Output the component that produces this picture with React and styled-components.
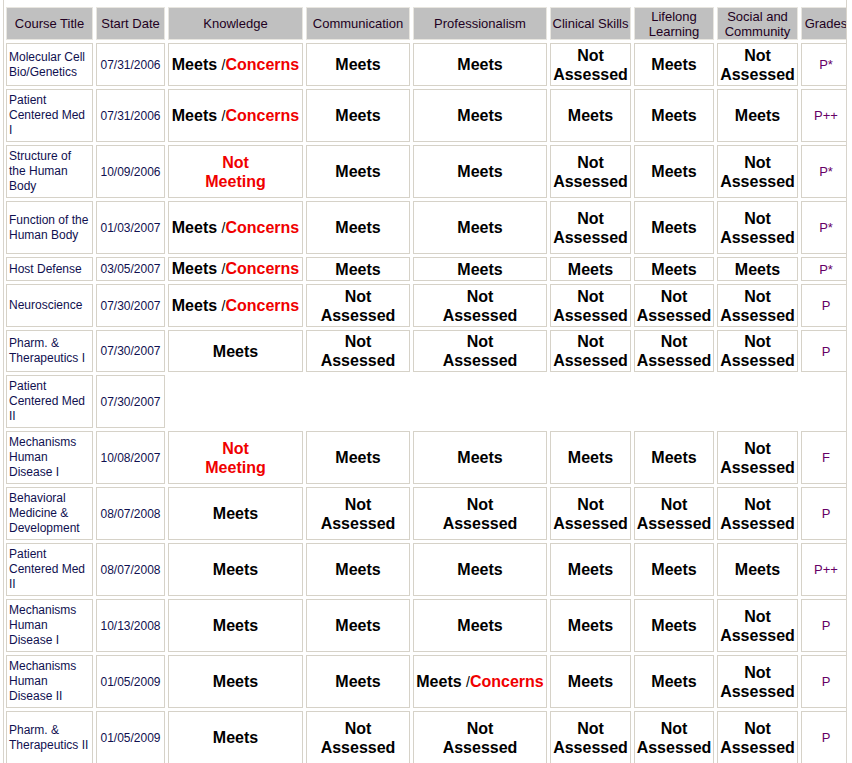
import React from 'react';
import styled, { createGlobalStyle } from 'styled-components';

const Global = createGlobalStyle`
  body { margin: 0; background: #fff; font-family: "Liberation Sans", Arial, sans-serif; }
`;

const Frame = styled.div`
  width: 844px;
  margin-left: 3px;
  border-left: 1px solid #d8d4cc;
  border-right: 1px solid #d8d4cc;
  padding-top: 4px;
  height: 763px;
  overflow: hidden;
  box-sizing: border-box;
`;

const Table = styled.table`
  border-collapse: separate;
  border-spacing: 3px;
  table-layout: fixed;
  width: 842px;
  margin-left: -1px;
`;

const Th = styled.th`
  background: #c0c0c0;
  border: 1px solid #e8e6e0;
  color: #220022;
  font-size: 13px;
  font-weight: normal;
  padding: 0 1px;
  line-height: 15px;
  height: 33px;
  box-sizing: border-box;
`;

const Td = styled.td`
  border: 1px solid #d6d2c8;
  text-align: center;
  padding: 0 1px;
  box-sizing: border-box;
`;

const TitleCell = styled(Td)`
  text-align: left;
  font-size: 12px;
  line-height: 15px;
  color: #101050;
  padding-left: 2px;
`;

const DateCell = styled(Td)`
  font-size: 12px;
  color: #101050;
`;

const Val = styled(Td)`
  font-size: 16px;
  font-weight: bold;
  line-height: 19px;
  color: #000;
`;

const Red = styled.span`
  color: #f00000;
`;
const Slash = styled.span`
  font-weight: normal;
  font-size: 14px;
`;

const Grade = styled(Td)`
  font-size: 13px;
  color: #660066;
`;

const Empty = styled.td``;

const M = 'Meets', NA = 'Not Assessed', MC = 'MC', NM = 'NM';

const rows = [
  ['Molecular Cell Bio/Genetics', '07/31/2006', [MC, M, M, NA, M, NA], 'P*', 43],
  ['Patient Centered Med I', '07/31/2006', [MC, M, M, M, M, M], 'P++', 53],
  ['Structure of the Human Body', '10/09/2006', [NM, M, M, NA, M, NA], 'P*', 53],
  ['Function of the Human Body', '01/03/2007', [MC, M, M, NA, M, NA], 'P*', 53],
  ['Host Defense', '03/05/2007', [MC, M, M, M, M, M], 'P*', 24],
  ['Neuroscience', '07/30/2007', [MC, NA, NA, NA, NA, NA], 'P', 43],
  ['Pharm. & Therapeutics I', '07/30/2007', [M, NA, NA, NA, NA, NA], 'P', 42],
  ['Patient Centered Med II', '07/30/2007', null, null, 53],
  ['Mechanisms Human Disease I', '10/08/2007', [NM, M, M, M, M, NA], 'F', 53],
  ['Behavioral Medicine & Development', '08/07/2008', [M, NA, NA, NA, NA, NA], 'P', 53],
  ['Patient Centered Med II', '08/07/2008', [M, M, M, M, M, M], 'P++', 53],
  ['Mechanisms Human Disease I', '10/13/2008', [M, M, M, M, M, NA], 'P', 53],
  ['Mechanisms Human Disease II', '01/05/2009', [M, M, MC, M, M, NA], 'P', 53],
  ['Pharm. & Therapeutics II', '01/05/2009', [M, NA, NA, NA, NA, NA], 'P', 53],
];

const render = (v) => {
  if (v === MC) return <>Meets <Slash>/</Slash><Red>Concerns</Red></>;
  if (v === NM) return <Red>Not<br />Meeting</Red>;
  if (v === NA) return <>Not<br />Assessed</>;
  return v;
};

const widths = [87, 69, 135, 104, 134, 81, 80, 81, 50];

export default function App() {
  return (
    <>
      <Global />
      <Frame>
        <Table>
          <colgroup>
            {widths.map((w, i) => <col key={i} style={{ width: w }} />)}
          </colgroup>
          <thead>
            <tr>
              <Th>Course Title</Th>
              <Th>Start Date</Th>
              <Th>Knowledge</Th>
              <Th>Communication</Th>
              <Th>Professionalism</Th>
              <Th>Clinical Skills</Th>
              <Th>Lifelong Learning</Th>
              <Th>Social and Community</Th>
              <Th>Grades</Th>
            </tr>
          </thead>
          <tbody>
            {rows.map(([title, date, vals, grade, h], i) => (
              <tr key={i} style={{ height: h }}>
                <TitleCell>{title}</TitleCell>
                <DateCell>{date}</DateCell>
                {vals ? (
                  <>
                    {vals.map((v, j) => <Val key={j}>{render(v)}</Val>)}
                    <Grade>{grade}</Grade>
                  </>
                ) : (
                  <Empty colSpan={7} />
                )}
              </tr>
            ))}
          </tbody>
        </Table>
      </Frame>
    </>
  );
}
